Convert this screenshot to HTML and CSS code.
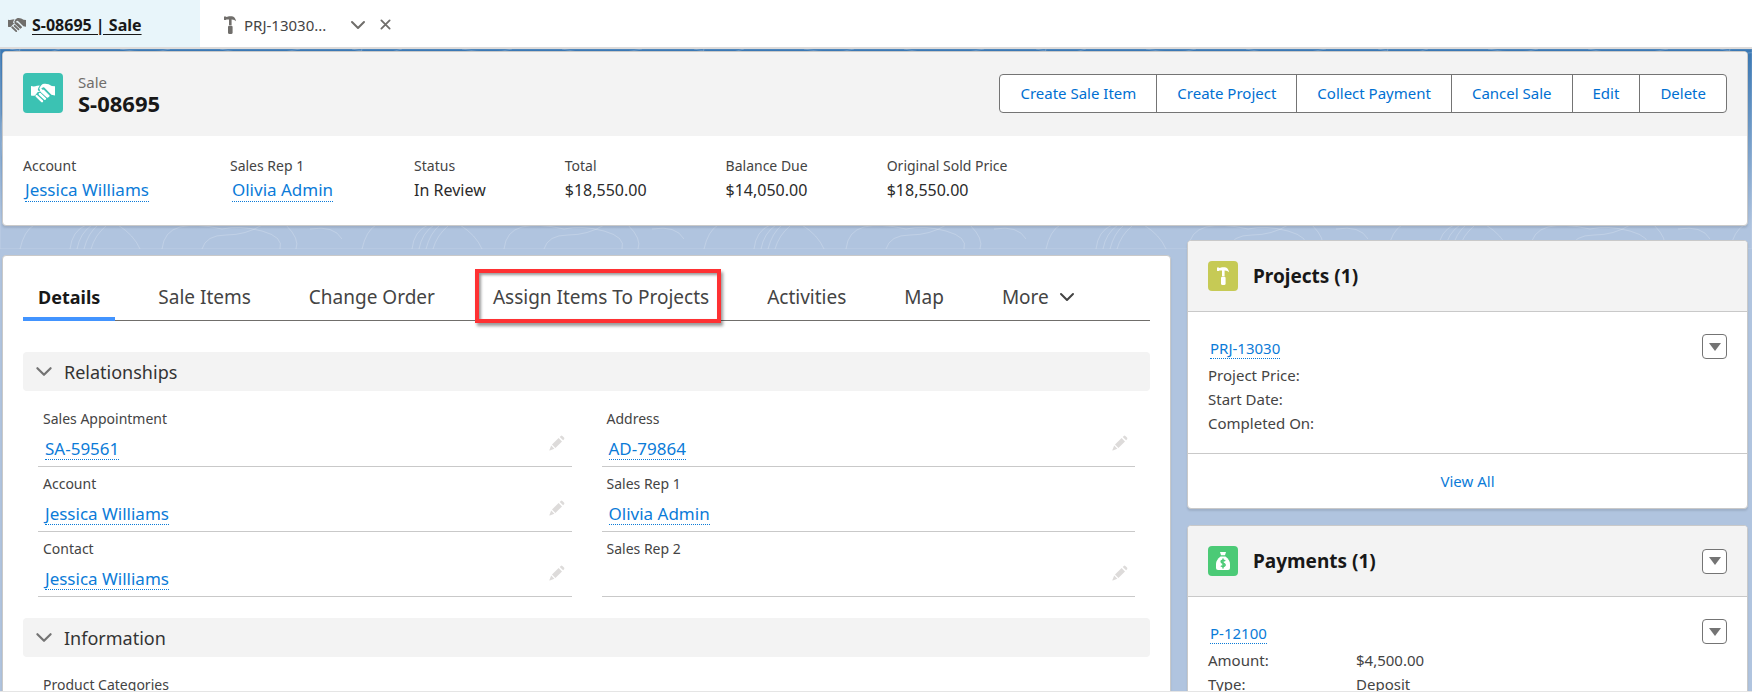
FILE: index.html
```html
<!DOCTYPE html>
<html lang="en">
<head>
<meta charset="utf-8">
<title>S-08695 | Sale</title>
<link rel="stylesheet" href="styles.css">
</head>
<body>
<svg class="sprite" aria-hidden="true">
  <symbol id="i-shake" viewBox="0 0 24 20">
    <path d="M0 3 Q3 4 6 2.800 L8.800 2.400 Q6.800 5 6.800 7 Q9 10 12.600 6.500 L18.800 12.800 Q18 15 16 14.500 L9.500 8.800 L6.800 9 L4 12.400 Q2 13 0 12.400 Z"/>
    <path d="M24 3.200 L20.800 3 Q17 .2 12.800 .8 Q9.600 1.500 8.200 5.900 Q9 7 11.800 4.500 Q13 4 14 5.200 L20.400 11.800 L24 12.400 Z"/>
    <path d="M10 7 L16.500 13.200" fill="none" stroke="currentColor" stroke-width="2.600" stroke-linecap="round"/>
    <path d="M5.600 13 L11 18.200 M8.800 11 L14 15.800" fill="none" stroke="currentColor" stroke-width="2.400" stroke-linecap="round"/>
  </symbol>
  <symbol id="i-hammer" viewBox="0 0 12 18">
    <path d="M0 .5 H1.800 L2.500 1 L5 .3 H8 Q11.300 1 12 5.200 Q10.500 3.500 7.600 3.600 V9 H5 V3.600 H2.500 L1.800 4 H0 Z"/>
    <rect x="4" y="9.500" width="4.600" height="8.500" rx="1.500"/>
  </symbol>
  <symbol id="i-bag" viewBox="0 0 14 18">
    <path d="M4 0 H10 L9 3.200 H5 Z"/>
    <path d="M4.500 4.500 H9.500 Q14 8 14 12 V16 Q14 18 12 18 H2 Q0 18 0 16 V12 Q0 8 4.500 4.500 Z"/>
    <path class="dollar" d="M9.300 8.900 Q7 7.500 5.300 8.900 Q4.600 10.400 7 11.200 Q9.600 12 9 13.600 Q7.500 15.300 4.800 13.900 M7 6.500 V16.500"/>
  </symbol>
  <symbol id="i-chev" viewBox="0 0 16 10"><path d="M2 2 L8 8 L14 2" fill="none" stroke="currentColor" stroke-width="2" stroke-linecap="round" stroke-linejoin="round"/></symbol>
  <symbol id="i-x" viewBox="0 0 12 12"><path d="M1.500 1.500 L10.500 10.500 M10.500 1.500 L1.500 10.500" fill="none" stroke="currentColor" stroke-width="2" stroke-linecap="round"/></symbol>
  <symbol id="i-pen" viewBox="0 0 16 16"><path d="M3 9.600 L9.600 3 L13 6.400 L6.400 13 Z M10.700 1.900 L11.800 .9 Q12.600 .3 13.400 1 L15 2.600 Q15.700 3.400 15.100 4.200 L14.100 5.300 Z M2.200 10.600 L5.400 13.800 L.8 15.600 Q.2 15.700 .4 15.100 Z"/></symbol>
  <symbol id="i-tri" viewBox="0 0 12 8"><path d="M0 0 H12 L6 8 Z"/></symbol>
</svg>

<nav class="tabs" aria-label="Workspace tabs">
  <div class="tab tab-active">
    <svg class="tab-shake"><use href="#i-shake"/></svg>
    <a href="#sale">S-08695 | Sale</a>
  </div>
  <div class="tab tab-second">
    <svg class="tab-hammer"><use href="#i-hammer"/></svg>
    <a href="#project">PRJ-13030...</a>
    <button type="button" aria-label="Tab actions"><svg class="tab-chev"><use href="#i-chev"/></svg></button>
    <button type="button" aria-label="Close tab"><svg class="tab-x"><use href="#i-x"/></svg></button>
  </div>
</nav>

<main class="page">
  <svg class="topo" aria-hidden="true">
    <defs>
      <pattern id="contours" width="342" height="200" patternUnits="userSpaceOnUse">
        <path d="M20 0 Q-6 60 4 120 M20 200 Q24 182 34 176 M70 200 Q72 182 86 176 M77 200 Q80 184 92 176 M84 200 Q88 184 98 176 M91 200 Q95 186 106 177 M118 176 Q134 186 140 200 M162 200 Q164 182 180 178 T222 180 Q240 176 262 182 T280 200 M202 200 Q206 186 226 186 T262 176 M286 176 Q300 190 296 200 M310 180 Q334 176 342 190 M10 0 Q40 8 60 0 M120 0 Q150 6 170 0 M220 0 Q260 10 300 0"/>
      </pattern>
    </defs>
    <rect width="100%" height="100%" fill="url(#contours)"/>
  </svg>

  <header class="card record">
    <div class="record-top">
      <span class="badge badge-sale"><svg><use href="#i-shake"/></svg></span>
      <div class="record-name">
        <p>Sale</p>
        <h1>S-08695</h1>
      </div>
      <div class="actions">
        <button type="button">Create Sale Item</button>
        <button type="button">Create Project</button>
        <button type="button">Collect Payment</button>
        <button type="button">Cancel Sale</button>
        <button type="button">Edit</button>
        <button type="button">Delete</button>
      </div>
    </div>
    <dl class="facts">
      <div><dt>Account</dt><dd><a class="link" href="#account">Jessica Williams</a></dd></div>
      <div><dt>Sales Rep 1</dt><dd><a class="link" href="#rep">Olivia Admin</a></dd></div>
      <div><dt>Status</dt><dd>In Review</dd></div>
      <div><dt>Total</dt><dd>$18,550.00</dd></div>
      <div><dt>Balance Due</dt><dd>$14,050.00</dd></div>
      <div><dt>Original Sold Price</dt><dd>$18,550.00</dd></div>
    </dl>
  </header>

  <div class="columns">
    <section class="card details">
      <div class="subtabs" role="tablist">
        <button class="current" type="button" role="tab" aria-selected="true">Details</button>
        <button type="button" role="tab">Sale Items</button>
        <button type="button" role="tab">Change Order</button>
        <button class="marked" type="button" role="tab">Assign Items To Projects</button>
        <button type="button" role="tab">Activities</button>
        <button type="button" role="tab">Map</button>
        <button class="more" type="button">More <svg><use href="#i-chev"/></svg></button>
      </div>

      <h2><button type="button" class="section"><svg><use href="#i-chev"/></svg>Relationships</button></h2>
      <dl class="fields">
        <div><dt>Sales Appointment</dt><dd><a class="link" href="#sa">SA-59561</a><button type="button" aria-label="Edit Sales Appointment"><svg><use href="#i-pen"/></svg></button></dd></div>
        <div><dt>Address</dt><dd><a class="link" href="#ad">AD-79864</a><button type="button" aria-label="Edit Address"><svg><use href="#i-pen"/></svg></button></dd></div>
        <div><dt>Account</dt><dd><a class="link" href="#account">Jessica Williams</a><button type="button" aria-label="Edit Account"><svg><use href="#i-pen"/></svg></button></dd></div>
        <div><dt>Sales Rep 1</dt><dd><a class="link" href="#rep">Olivia Admin</a></dd></div>
        <div><dt>Contact</dt><dd><a class="link" href="#contact">Jessica Williams</a><button type="button" aria-label="Edit Contact"><svg><use href="#i-pen"/></svg></button></dd></div>
        <div><dt>Sales Rep 2</dt><dd><button type="button" aria-label="Edit Sales Rep 2"><svg><use href="#i-pen"/></svg></button></dd></div>
      </dl>

      <h2><button type="button" class="section"><svg><use href="#i-chev"/></svg>Information</button></h2>
      <dl class="fields">
        <div><dt>Product Categories</dt><dd></dd></div>
      </dl>
    </section>

    <aside class="side">
      <section class="card related">
        <div class="related-top">
          <span class="badge badge-project"><svg><use href="#i-hammer"/></svg></span>
          <h2>Projects (1)</h2>
        </div>
        <div class="related-body">
          <div class="related-link">
            <a class="link" href="#prj">PRJ-13030</a>
            <button class="menu" type="button" aria-label="Project actions"><svg><use href="#i-tri"/></svg></button>
          </div>
          <dl class="pairs">
            <dt>Project Price:</dt><dd></dd>
            <dt>Start Date:</dt><dd></dd>
            <dt>Completed On:</dt><dd></dd>
          </dl>
        </div>
        <a class="view-all" href="#all">View All</a>
      </section>
      <section class="card related">
        <div class="related-top">
          <span class="badge badge-payment"><svg><use href="#i-bag"/></svg></span>
          <h2>Payments (1)</h2>
          <button class="menu" type="button" aria-label="Payments actions"><svg><use href="#i-tri"/></svg></button>
        </div>
        <div class="related-body">
          <div class="related-link">
            <a class="link" href="#pay">P-12100</a>
            <button class="menu" type="button" aria-label="Payment actions"><svg><use href="#i-tri"/></svg></button>
          </div>
          <dl class="pairs">
            <dt>Amount:</dt><dd>$4,500.00</dd>
            <dt>Type:</dt><dd>Deposit</dd>
          </dl>
        </div>
      </section>
    </aside>
  </div>
</main>
<footer class="utility"></footer>
</body>
</html>
```
FILE: styles.css
```css
* { box-sizing: border-box; }
html, body { height: 100%; }
body {
  margin: 0;
  display: flex;
  flex-direction: column;
  overflow: hidden;
  font-family: "Segoe UI", "Noto Sans", "Open Sans", sans-serif;
  font-size: 16px;
  line-height: 24px;
  color: #2b2b2b;
}
h1, h2, p, dl, dt, dd { margin: 0; font-weight: 400; }
button { font: inherit; color: inherit; background: none; border: 0; padding: 0; cursor: pointer; }
svg { display: block; fill: currentColor; flex: none; }
.sprite { position: absolute; width: 0; height: 0; }
.link { color: #0b7bd8; text-decoration: none; border-bottom: 1px dotted #0b7bd8; line-height: 20px; margin: 0 2px; }

.tabs { display: flex; flex: none; height: 49px; border-bottom: 2px solid #dddbda; background: #fff; font-size: 15px; }
.tab { display: flex; align-items: center; color: #706e6b; }
.tab a { color: #444; text-decoration: none; }
.tab-active { width: 200px; padding: 2px 8px 0; gap: 6px; background: #e8f5fa; }
.tab-active a { color: #181818; font-size: 16px; font-weight: 700; text-decoration: underline; text-underline-offset: 3px; }
.tab-second { padding: 2px 24px 0; gap: 14px; }
.tab-shake { width: 18px; height: 16px; }
.tab-hammer { width: 12px; height: 18px; margin-right: -6px; }
.tab-second a { margin-right: 10px; }
.tab-chev { width: 16px; height: 10px; }
.tab-x { width: 11px; height: 11px; }

.page { position: relative; flex: 1; min-height: 0; overflow: hidden; padding: 2px 4px 0 2px; background: linear-gradient(#3a78b4, #b0c4df 180px); }
.topo { position: absolute; top: 0; left: 0; width: 100%; height: 200px; fill: none; stroke: #fff; stroke-opacity: .2; stroke-width: 1; }
.card { position: relative; background: #fff; border: 1px solid #c9c9c9; border-radius: 4px; box-shadow: 0 2px 2px rgba(0, 0, 0, .1); overflow: hidden; }

.record-top { display: flex; align-items: center; height: 84px; padding: 0 20px 2px; background: #f3f3f3; }
.badge { display: grid; place-items: center; border-radius: 4px; color: #fff; flex: none; }
.badge-sale { width: 40px; height: 40px; background: #3bc2b3; }
.badge-sale svg { width: 24px; height: 20px; }
.record-name { margin-left: 15px; }
.record-name p { color: #706e6b; font-size: 15px; line-height: 20px; }
.record-name h1 { font-size: 22px; line-height: 22px; font-weight: 700; color: #181818; }
.actions { display: flex; margin-left: auto; border: 1px solid #747474; border-radius: 4px; background: #fff; }
.actions button { height: 37px; padding: 0 20px; color: #0070d2; font-size: 15px; }
.actions button + button { border-left: 1px solid #747474; }
.facts { display: flex; gap: 79px; padding: 18px 20px 23px; }
.facts dt { font-size: 14px; color: #444; line-height: 24px; }
.facts dd { line-height: 24px; }
.facts .link, .fields .link { font-size: 17px; }

.columns { display: grid; grid-template-columns: 1169fr 561fr; gap: 16px; align-items: start; padding-top: 14px; }
.details { margin-top: 15px; padding: 13px 20px 20px; min-height: 600px; }
.subtabs { display: flex; border-bottom: 1px solid #706e6b; margin-bottom: 31px; font-size: 19px; color: #444; }
.subtabs button { height: 52px; padding: 4px 15px 0; margin-right: 28px; margin-bottom: -1px; }
.subtabs .current { font-size: 18px; font-weight: 700; color: #181818; border-bottom: 4px solid #4294ff; padding-top: 8px; }
.subtabs .marked { position: relative; }
.marked::after {
  content: "";
  position: absolute;
  inset: 0 3px -2px -3px;
  border: 4px solid #fe3133;
  box-shadow: 2px 3px 3px rgba(0, 0, 0, .4), inset 2px 2px 3px rgba(0, 0, 0, .4);
}
.subtabs .more { display: flex; align-items: center; gap: 10px; }
.more svg { width: 16px; height: 10px; }
.section { display: flex; align-items: center; gap: 11px; width: 100%; height: 39px; padding: 0 12px; border-radius: 4px; background: #f3f3f3; font-size: 18px; color: #333; }
.section svg { width: 18px; height: 11px; color: #747474; }
.fields { display: grid; grid-template-columns: 1fr 1fr; column-gap: 30px; padding: 11px 15px 21px; }
.fields > div { height: 65px; padding: 5px 5px 0; border-bottom: 1px solid #c9c9c9; }
.fields dt { font-size: 14px; color: #444; }
.fields dd { display: flex; align-items: flex-end; height: 29px; }
.fields button { margin: 0 2px 9px auto; color: #dddbda; }
.fields svg { width: 16px; height: 16px; }

.side { display: grid; gap: 16px; }
.related-top { display: flex; align-items: center; gap: 15px; height: 71px; padding: 0 20px; background: #f3f3f3; border-bottom: 1px solid #c9c9c9; }
.related-top h2 { font-size: 19px; font-weight: 700; color: #181818; }
.related-top .menu { margin-left: auto; }
.related .badge { width: 30px; height: 30px; }
.badge-project { background: #c6ca55; }
.badge-project svg { width: 12px; height: 18px; }
.badge-payment { background: #4bca76; }
.badge-payment svg { width: 14px; height: 18px; }
.dollar { fill: none; stroke: #4bca76; stroke-width: 1.500; }
.menu { display: grid; place-items: center; width: 25px; height: 25px; border: 1px solid #747474; border-radius: 4px; background: #fff; color: #747474; }
.menu svg { width: 12px; height: 8px; }
.related-body { padding: 22px 20px 18px; font-size: 15px; }
.related-link { display: flex; justify-content: space-between; align-items: flex-end; margin-bottom: 4px; }
.pairs { display: grid; grid-template-columns: 148px 1fr; color: #444; }
.view-all { display: block; padding: 15px; border-top: 1px solid #c9c9c9; text-align: center; color: #0b7bd8; text-decoration: none; font-size: 15px; }
.utility { flex: none; height: 1px; background: #e5e5e5; }
```
